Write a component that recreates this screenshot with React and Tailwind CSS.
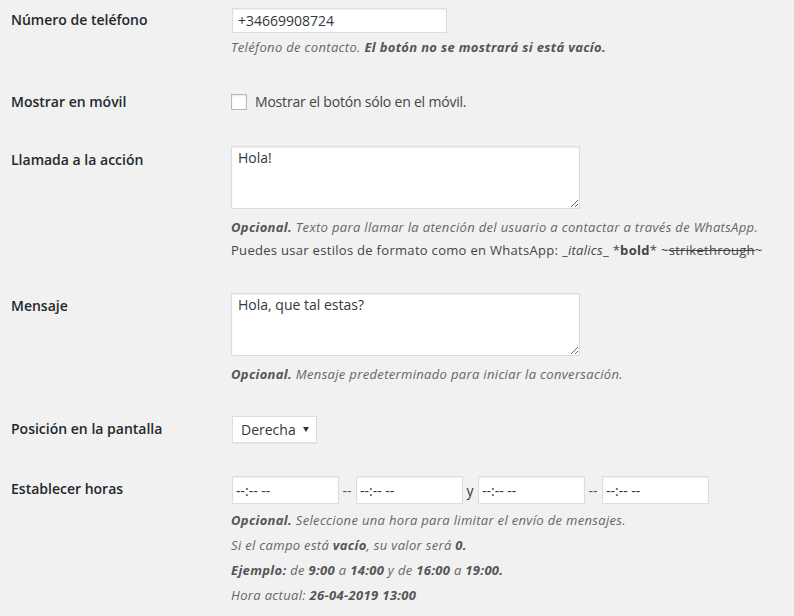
import React from 'react';

const font = "font-['Open_Sans','Noto_Sans',sans-serif]";

const Desc = ({ children, className = '' }) => (
  <p className={`text-[13px] leading-[20px] tracking-[0.33px] italic text-[#666] ${className}`}>{children}</p>
);

const TimeBox = () => (
  <input
    type="text"
    readOnly
    value="--:-- --"
    className="w-[107px] h-[28px] ml-[1px] border border-[#ddd] bg-white px-[3px] text-[14px] text-[#32373c] shadow-[inset_0_1px_2px_rgba(0,0,0,0.07)] outline-none"
  />
);

const Row = ({ label, pt, labelPt, children }) => (
  <div className="flex" style={{ paddingTop: pt }}>
    <div className="w-[220px] shrink-0 text-[14px] leading-[20px] font-semibold text-[#23282d]" style={{ paddingTop: labelPt }}>
      {label}
    </div>
    <div className="flex flex-col">{children}</div>
  </div>
);

export default function App() {
  return (
    <div className={`min-h-[616px] w-[794px] bg-[#f1f1f1] pl-[11px] ${font}`}>
      <Row label="Número de teléfono" pt={8} labelPt={2}>
        <input
          type="text"
          readOnly
          value="+34669908724"
          className="w-[215px] h-[25px] ml-[1px] border border-[#ddd] bg-white px-[5px] text-[14px] text-[#32373c] shadow-[inset_0_1px_2px_rgba(0,0,0,0.07)] outline-none"
        />
        <Desc className="mt-[4px]">
          Teléfono de contacto. <b className="text-[#555]">El botón no se mostrará si está vacío.</b>
        </Desc>
      </Row>

      <Row label="Mostrar en móvil" pt={35} labelPt={0}>
        <label className="flex items-start text-[14px] leading-[20px] tracking-[-0.2px] text-[#444]">
          <span className="mt-[2px] mr-[8px] h-[16px] w-[16px] border border-[#b4b9be] bg-white shadow-[inset_0_1px_2px_rgba(0,0,0,0.1)]" />
          Mostrar el botón sólo en el móvil.
        </label>
      </Row>

      <Row label="Llamada a la acción" pt={34} labelPt={4}>
        <textarea
          readOnly
          defaultValue="Hola!"
          className="w-[349px] h-[63px] border border-[#ddd] bg-white px-[6px] pt-[1px] text-[14px] leading-[20px] text-[#32373c] shadow-[inset_0_1px_2px_rgba(0,0,0,0.07)] outline-none"
        />
        <Desc className="mt-[8px]">
          <b className="text-[#555]">Opcional.</b> Texto para llamar la atención del usuario a contactar a través de WhatsApp.
        </Desc>
        <p className="mt-[3px] text-[13px] leading-[20px] tracking-[0.3px] text-[#444]">
          Puedes usar estilos de formato como en WhatsApp: _<i>italics</i>_ *<b>bold</b>* ~<span className="line-through">strikethrough</span>~
        </p>
      </Row>

      <Row label="Mensaje" pt={33} labelPt={3}>
        <textarea
          readOnly
          defaultValue="Hola, que tal estas?"
          className="w-[349px] h-[63px] border border-[#ddd] bg-white px-[6px] pt-[1px] text-[14px] leading-[20px] text-[#32373c] shadow-[inset_0_1px_2px_rgba(0,0,0,0.07)] outline-none"
        />
        <Desc className="mt-[8px]">
          <b className="text-[#555]">Opcional.</b> Mensaje predeterminado para iniciar la conversación.
        </Desc>
      </Row>

      <Row label="Posición en la pantalla" pt={32} labelPt={3}>
        <div className="ml-[1px] flex h-[27px] w-[85px] items-center justify-between border border-[#ddd] bg-white pl-[8px] pr-[7px] text-[14px] text-[#32373c] shadow-[0_1px_1px_rgba(0,0,0,0.04)]">
          <span>Derecha</span>
          <svg width="6" height="5" viewBox="0 0 6 5">
            <path d="M0 0 H6 L3 5 Z" fill="#333" />
          </svg>
        </div>
      </Row>

      <Row label="Establecer horas" pt={33} labelPt={3}>
        <div className="flex items-center text-[14px] text-[#555]">
          <TimeBox />
          <span className="w-[16px] text-center">--</span>
          <TimeBox />
          <span className="w-[14px] text-center text-[#32373c]">y</span>
          <TimeBox />
          <span className="w-[16px] text-center">--</span>
          <TimeBox />
        </div>
        <Desc className="mt-[6px]">
          <b className="text-[#555]">Opcional.</b> Seleccione una hora para limitar el envío de mensajes.
        </Desc>
        <Desc className="mt-[5px]">
          Si el campo está <b className="text-[#555]">vacío</b>, su valor será <b className="text-[#555]">0.</b>
        </Desc>
        <Desc className="mt-[5px]">
          <b className="text-[#555]">Ejemplo:</b> de <b className="text-[#555]">9:00</b> a <b className="text-[#555]">14:00</b> y de{' '}
          <b className="text-[#555]">16:00</b> a <b className="text-[#555]">19:00.</b>
        </Desc>
        <Desc className="mt-[5px]">
          Hora actual: <b className="text-[#555]">26-04-2019 13:00</b>
        </Desc>
      </Row>
    </div>
  );
}
